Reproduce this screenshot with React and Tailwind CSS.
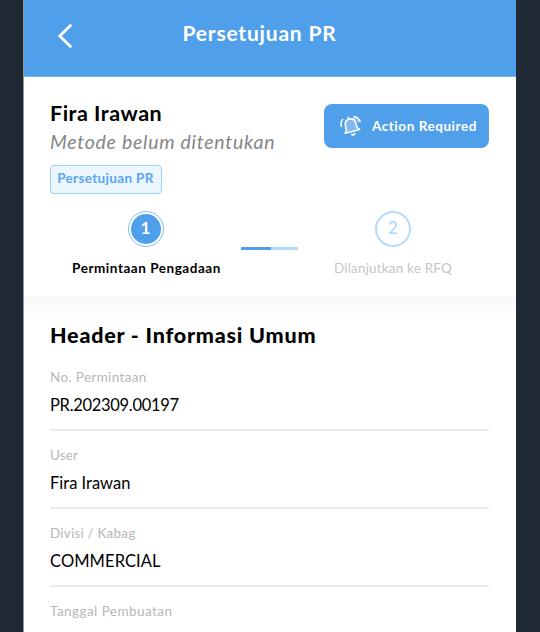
const fields = [
  { label: "No. Permintaan", value: "PR.202309.00197", labelClass: "tracking-[0.35px]", valueClass: "tracking-[-0.3px]" },
  { label: "User", value: "Fira Irawan", labelClass: "tracking-[0.1px]", valueClass: "tracking-[0px]" },
  { label: "Divisi / Kabag", value: "COMMERCIAL", labelClass: "tracking-[0.2px]", valueClass: "tracking-[0.1px]" },
  { label: "Tanggal Pembuatan", value: "", labelClass: "tracking-[0.45px]", valueClass: "" },
];

function BackIcon() {
  return (
    <svg className="h-6 w-4" viewBox="0 0 16 24" fill="none" stroke="white" strokeWidth="2.7">
      <path d="M14.2 0.7 L2.8 12 L14.2 23.3" />
    </svg>
  );
}

function BellIcon() {
  return (
    <svg className="h-[22px] w-[22px] shrink-0" viewBox="0 0 22 22" fill="none" stroke="white" strokeWidth="1.6" strokeLinecap="round">
      <path d="M5.2 18.2 L6.4 15.6 L5.4 10.6 C4.8 7.2 6.3 4.9 9.2 4.1 C12.1 3.4 14.8 4.8 15.7 7.8 L17.2 12.7 L19.7 14.4 Z" fill="white" fillOpacity="0.28" strokeLinejoin="round" />
      <path d="M8.6 3.7 L8.3 2.3" />
      <path d="M12 19.5 Q13.4 20.5 14.6 18.8" strokeWidth="1.9" />
      <path d="M1.3 11.3 C0.8 8.8 1.2 6.3 2.5 4.4" />
      <path d="M14.2 1.4 C16.9 2.1 19 4 20 6.4" />
      <path d="M13.6 3 C15.7 3.8 17.2 5 18.2 7" strokeWidth="0.9" strokeOpacity="0.8" />
    </svg>
  );
}

export default function App() {
  return (
    <div className="h-[632px] w-[540px] overflow-hidden bg-[#1f2a35] pl-[23px] font-['Lato',sans-serif] text-black">
      <main className="flex h-[632px] w-[493px] flex-col overflow-hidden rounded-tr-[2px] border-l border-[#8d9399] bg-white">
        <header className="grid h-[77px] shrink-0 grid-cols-[72px_1fr_93px] border-b border-[#75b3ef] bg-[#509fea] pb-[8px] text-white">
          <div className="flex items-center pt-1 pl-[33px]"><BackIcon /></div>
          <h1 className="flex items-center justify-center pb-[2px] text-[21px] leading-[26px] font-bold tracking-[0.8px] whitespace-nowrap">Persetujuan PR</h1>
        </header>

        <section className="h-[219px] shrink-0 px-[26px] pt-[27px]">
          <div className="flex h-[61px] justify-between">
            <div className="w-[250px]">
              <h2 className="mt-[-4px] text-[21.5px] leading-[26px] font-bold tracking-[0.5px]">Fira Irawan</h2>
              <p className="mt-[3px] text-[19.5px] leading-[26px] tracking-[0.73px] whitespace-nowrap text-[#858585] italic">Metode belum ditentukan</p>
            </div>
            <button className="mr-px flex h-[44px] w-[165px] shrink-0 items-center rounded-lg bg-[#509fea] pl-[16px] text-[13.5px] font-bold text-white">
              <BellIcon />
              <span className="ml-[10px] tracking-[0.55px] whitespace-nowrap">Action Required</span>
            </button>
          </div>
          <div className="flex h-[29px] w-[112px] items-center justify-center rounded-[4px] border border-[#9dd0fb] bg-[#ebf6fe] pr-px pb-[2px] text-[13.5px] font-bold tracking-[0.35px] whitespace-nowrap text-[#5aa6ef]">Persetujuan PR</div>

          <div className="mt-[17px] flex">
            <div className="flex w-[191px] flex-col items-center">
              <div className="flex size-9 items-center justify-center rounded-full border-[1.5px] border-[#7dbcf5]">
                <div className="flex size-[30px] items-center justify-center rounded-full bg-[#509fea] pb-[3px] text-[17px] font-bold text-white">1</div>
              </div>
              <p className="mt-[13px] ml-[2px] text-[13.5px] leading-[17px] font-bold tracking-[0.54px] whitespace-nowrap">Permintaan Pengadaan</p>
            </div>
            <div className="mt-[36px] flex h-[3px] w-[57px] bg-[#b1dbfd]">
              <div className="h-full w-[30px] bg-[#509fea]" />
            </div>
            <div className="flex w-[190px] flex-col items-center">
              <div className="flex size-9 items-center justify-center rounded-full border-2 border-[#b4dcfd] pb-[3px] text-[17px] text-[#a9d6fc]">2</div>
              <p className="mt-[13px] text-[13.5px] leading-[17px] tracking-[0.18px] whitespace-nowrap text-[#c6c6c6]">Dilanjutkan ke RFQ</p>
            </div>
          </div>
        </section>

        <section className="grow bg-linear-to-b from-[#f9f9f9] to-white to-[26px] px-[26px] pt-[26px]">
          <h2 className="text-[21.5px] leading-[26px] font-black tracking-[0.78px] whitespace-nowrap">Header - Informasi Umum</h2>
          <dl className="mt-[21px] mr-px">
            {fields.map((f) => (
              <div key={f.label} className="h-[78px]">
                <div className="h-[62px] border-b-2 border-[#ebebeb]">
                  <dt className={`text-[13.5px] leading-[17px] text-[#b7b7b7] ${f.labelClass}`}>{f.label}</dt>
                  <dd className={`mt-[9px] text-[16.5px] leading-[21px] ${f.valueClass}`}>{f.value}</dd>
                </div>
              </div>
            ))}
          </dl>
        </section>
      </main>
    </div>
  );
}
